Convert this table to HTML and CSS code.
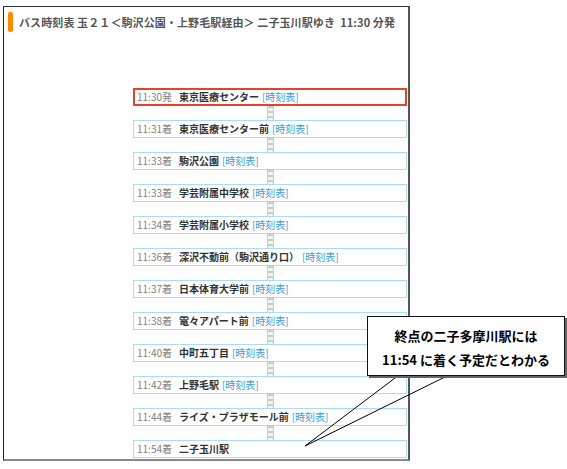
FILE: index.html
```html
<!DOCTYPE html>
<html lang="ja">
<head>
<meta charset="utf-8">
<link rel="stylesheet" href="styles.css">
</head>
<body>
<div class="frame">
  <div class="header">
    <span class="bar"></span>
    <h1 class="title">バス時刻表 玉２１＜駒沢公園・上野毛駅経由＞ 二子玉川駅ゆき&nbsp; 11:30 分発</h1>
  </div>
  <ul class="timeline">
    <li class="stop current"><span class="time">11:30発</span><span class="name">東京医療センター</span><a class="link">[時刻表]</a></li>
    <li class="rail"></li>
    <li class="stop"><span class="time">11:31着</span><span class="name">東京医療センター前</span><a class="link">[時刻表]</a></li>
    <li class="rail"></li>
    <li class="stop"><span class="time">11:33着</span><span class="name">駒沢公園</span><a class="link">[時刻表]</a></li>
    <li class="rail"></li>
    <li class="stop"><span class="time">11:33着</span><span class="name">学芸附属中学校</span><a class="link">[時刻表]</a></li>
    <li class="rail"></li>
    <li class="stop"><span class="time">11:34着</span><span class="name">学芸附属小学校</span><a class="link">[時刻表]</a></li>
    <li class="rail"></li>
    <li class="stop"><span class="time">11:36着</span><span class="name">深沢不動前（駒沢通り口）</span><a class="link">[時刻表]</a></li>
    <li class="rail"></li>
    <li class="stop"><span class="time">11:37着</span><span class="name">日本体育大学前</span><a class="link">[時刻表]</a></li>
    <li class="rail"></li>
    <li class="stop"><span class="time">11:38着</span><span class="name">電々アパート前</span><a class="link">[時刻表]</a></li>
    <li class="rail"></li>
    <li class="stop"><span class="time">11:40着</span><span class="name">中町五丁目</span><a class="link">[時刻表]</a></li>
    <li class="rail"></li>
    <li class="stop"><span class="time">11:42着</span><span class="name">上野毛駅</span><a class="link">[時刻表]</a></li>
    <li class="rail"></li>
    <li class="stop"><span class="time">11:44着</span><span class="name">ライズ・プラザモール前</span><a class="link">[時刻表]</a></li>
    <li class="rail"></li>
    <li class="stop"><span class="time">11:54着</span><span class="name">二子玉川駅</span></li>
  </ul>
</div>
<svg class="pointer" width="567" height="469" viewBox="0 0 567 469">
  <line x1="399" y1="375" x2="305" y2="446" stroke="#000" stroke-width="1"/>
  <line x1="449" y1="375" x2="305" y2="446" stroke="#000" stroke-width="1"/>
</svg>
<div class="callout">
  <p>終点の二子多摩川駅には</p>
  <p>11:54 に着く予定だとわかる</p>
</div>
</body>
</html>
```
FILE: styles.css
```css
html, body {
  margin: 0;
  padding: 0;
  background: #fff;
}
body {
  position: relative;
  width: 567px;
  height: 469px;
  overflow: hidden;
  font-family: "Noto Sans CJK JP", "Noto Sans", sans-serif;
}
.frame {
  box-sizing: border-box;
  margin: 6px 0 0 3px;
  width: 407px;
  height: 455px;
  border-top: 1px solid #333;
  border-left: 1px solid #222;
  border-right: 2px solid #555;
  border-bottom: 2px solid #888;
}
.header {
  display: flex;
  align-items: center;
  gap: 6px;
  padding: 5px 0 0 4px;
  height: 20px;
}
.bar {
  width: 5px;
  height: 20px;
  border-radius: 2px;
  background: #ff8a00;
}
.title {
  margin: 0;
  font-size: 11px;
  font-weight: 700;
  color: #555;
  white-space: nowrap;
  letter-spacing: 0.1px;
}
.timeline {
  list-style: none;
  margin: 56px 0 0 129px;
  padding: 0;
  width: 274px;
  display: flex;
  flex-direction: column;
  align-items: center;
}
.stop {
  box-sizing: border-box;
  width: 274px;
  height: 18px;
  border: 1px solid #a9dcf5;
  display: flex;
  align-items: center;
  padding-left: 3px;
  font-size: 10px;
  line-height: 16px;
  white-space: nowrap;
}
.stop.current {
  border: 2px solid #e2432a;
  padding-left: 2px;
}
.time {
  color: #808080;
  margin-right: 7px;
}
.name {
  color: #333;
  font-weight: 700;
  margin-right: 3px;
}
.link {
  color: #3c9ad8;
}
.rail {
  box-sizing: border-box;
  width: 7px;
  height: 14px;
  border-left: 1px solid #c3d2c3;
  border-right: 1px solid #c3d2c3;
  background: repeating-linear-gradient(#c3d2c3 0 2px, #eef3ee 2px 5px);
}
.pointer {
  position: absolute;
  left: 0;
  top: 0;
  pointer-events: none;
}
.callout {
  position: absolute;
  left: 367px;
  top: 316px;
  box-sizing: border-box;
  width: 198px;
  height: 60px;
  background: #fff;
  border: 1px solid #111;
  box-shadow: 2px 2px 0 #666;
  padding-top: 7px;
  text-align: center;
  font-size: 13px;
  font-weight: 700;
  color: #000;
}
.callout p {
  margin: 0;
  line-height: 24px;
}
```
